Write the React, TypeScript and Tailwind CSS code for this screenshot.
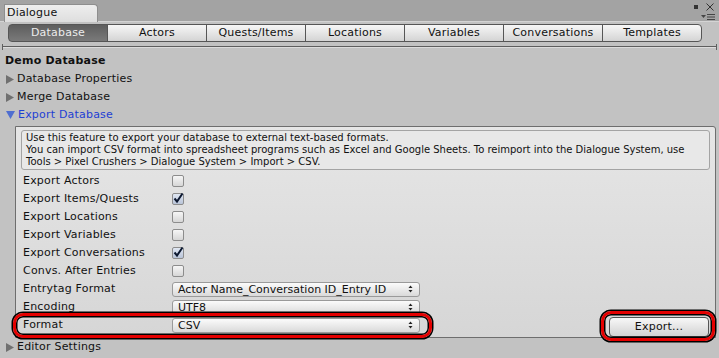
import React from "react";

const tabs = ["Database", "Actors", "Quests/Items", "Locations", "Variables", "Conversations", "Templates"];

function Arrow({ open }: { open?: boolean }) {
  return open ? (
    <svg width="9" height="8" viewBox="0 0 9 8" className="shrink-0">
      <polygon points="0,0 9,0 4.5,8" fill="#4f6ed0" />
    </svg>
  ) : (
    <svg width="8" height="9" viewBox="0 0 8 9" className="shrink-0">
      <polygon points="0,0 8,4.5 0,9" fill="#707070" />
    </svg>
  );
}

function Foldout({ label, open }: { label: string; open?: boolean }) {
  return (
    <div className="h-[18px] flex items-center pl-[6px] gap-[3px]">
      <Arrow open={open} />
      <span className={open ? "text-[#1e3fd4]" : "text-[#111]"}>{label}</span>
    </div>
  );
}

function Checkbox({ checked }: { checked?: boolean }) {
  return (
    <div
      className={`relative w-[12px] h-[12px] rounded-[2px] border border-[#8c8c8c] ${
        checked ? "bg-gradient-to-b from-[#dfe6f2] to-[#b9c4d8]" : "bg-gradient-to-b from-[#f6f6f6] to-[#d6d6d6]"
      }`}
    >
      {checked && (
        <svg width="12" height="12" viewBox="0 0 12 12" className="absolute -left-px -top-[2px]">
          <path d="M2.5 6.5 L5 9.5 L10.5 1.5" stroke="#0c1830" strokeWidth="2" fill="none" />
        </svg>
      )}
    </div>
  );
}

function Popup({ value }: { value: string }) {
  return (
    <div className="w-[248px] h-[15px] rounded-[3px] border border-[#9a9a9a] bg-gradient-to-b from-[#fbfbfb] to-[#dadada] flex items-center justify-between pl-[5px] pr-[6px]">
      <span className="text-[11px] leading-none tracking-normal text-[#111]">{value}</span>
      <svg width="5" height="8" viewBox="0 0 5 8">
        <polygon points="0.5,3 4.5,3 2.5,0.5" fill="#222" />
        <polygon points="0.5,5 4.5,5 2.5,7.5" fill="#222" />
      </svg>
    </div>
  );
}

function Row({ label, children }: { label: string; children: React.ReactNode }) {
  return (
    <div className="h-[18px] flex items-center">
      <span className="w-[156px] pl-[7px] shrink-0">{label}</span>
      {children}
    </div>
  );
}

export default function App() {
  return (
    <div className="relative w-[719px] h-[358px] overflow-hidden bg-[#c2c2c2] font-['DejaVu_Sans',sans-serif] text-[11px] tracking-[0.2px] text-[#111]">
      {/* window tab strip */}
      <div className="relative h-[22px] bg-[#a3a3a3] border-b border-[#d4d4d4] flex items-end pl-[4px]">
        <div className="w-[94px] h-[18px] -mb-px bg-gradient-to-b from-[#eeeeee] to-[#dedede] border border-b-0 border-[#8e8e8e] rounded-tr-[4px] flex items-center pl-[2px] text-[#111]">
          Dialogue
        </div>
        <div className="absolute right-[5px] top-[3px] flex items-center gap-[8px]">
          <div className="w-[4px] h-[4px] border border-[#333] bg-[#333] border-t-2" />
          <svg width="8" height="8" viewBox="0 0 8 8">
            <path d="M0.5 0.5 L7.5 7.5 M7.5 0.5 L0.5 7.5" stroke="#333" strokeWidth="1" />
          </svg>
        </div>
        <div className="absolute right-[4px] top-[14px] flex items-center gap-[1px]">
          <svg width="5" height="4" viewBox="0 0 5 4">
            <polygon points="0,0 5,0 2.5,3" fill="#444" />
          </svg>
          <svg width="8" height="6" viewBox="0 0 8 6">
            <path d="M0 0.5 H8 M0 3 H8 M0 5.5 H8" stroke="#444" strokeWidth="1" />
          </svg>
        </div>
      </div>

      {/* toolbar */}
      <div className="flex h-[18px] ml-[8px] mt-[2px]">
        {tabs.map((t, i) => (
          <div
            key={t}
            className={`w-[100px] flex items-center justify-center border border-[#565656] ${i > 0 ? "-ml-px" : ""} ${
              i === 0
                ? "rounded-l-[4px] bg-gradient-to-b from-[#5e5e5e] to-[#7a7a7a] text-[#ececec]"
                : "bg-gradient-to-b from-[#f7f7f7] to-[#d4d4d4] text-[#111]"
            } ${i === tabs.length - 1 ? "rounded-r-[4px]" : ""}`}
          >
            {t}
          </div>
        ))}
      </div>

      {/* separator */}
      <div className="relative mx-[3px] mt-[4px] h-[2px] border-t border-[#5e5e5e] bg-[#dcdcdc]">
        <div className="absolute -left-px -top-[3px] w-px h-[6px] bg-[#5e5e5e]" />
        <div className="absolute -right-px -top-[3px] w-px h-[6px] bg-[#5e5e5e]" />
      </div>

      <div className="mt-[4px]">
        <div className="h-[18px] flex items-center pl-[5px] font-bold">Demo Database</div>
        <Foldout label="Database Properties" />
        <Foldout label="Merge Database" />
        <Foldout label="Export Database" open />
      </div>

      {/* export box */}
      <div className="ml-[15px] mr-[3px] mt-[2px] h-[212px] border border-[#6e6e6e] rounded-tr-[3px] bg-gradient-to-b from-[#e6e6e6] to-[#d6d6d6] pt-[3px]">
        <div className="mx-[5px] h-[40px] rounded-[3px] border border-[#a4a4a4] bg-[#e8e8e8] px-[4px] pt-[1px] text-[10px] leading-[12px] tracking-normal text-[#111]">
          <div>Use this feature to export your database to external text-based formats.</div>
          <div>
            You can import CSV format into spreadsheet programs such as Excel and Google Sheets. To reimport into the Dialogue System, use
          </div>
          <div>Tools &gt; Pixel Crushers &gt; Dialogue System &gt; Import &gt; CSV.</div>
        </div>
        <div className="mt-[2px]">
          <Row label="Export Actors"><Checkbox /></Row>
          <Row label="Export Items/Quests"><Checkbox checked /></Row>
          <Row label="Export Locations"><Checkbox /></Row>
          <Row label="Export Variables"><Checkbox /></Row>
          <Row label="Export Conversations"><Checkbox checked /></Row>
          <Row label="Convs. After Entries"><Checkbox /></Row>
          <Row label="Entrytag Format"><Popup value="Actor Name_Conversation ID_Entry ID" /></Row>
          <Row label="Encoding"><Popup value="UTF8" /></Row>
          <div className="h-[21px] flex items-start justify-between">
            <div className="relative flex items-center h-[18px]">
              <span className="w-[156px] pl-[7px] shrink-0">Format</span>
              <Popup value="CSV" />
              <div className="absolute -left-[3px] -top-[3px] w-[419px] h-[25px] rounded-[10px] border-[3px] border-[#e40000] shadow-[0_0_0_1.5px_#000,inset_0_0_0_1.5px_#000]" />
            </div>
            <div className="relative mt-[1px] mr-[6px]">
              <div className="w-[100px] h-[20px] rounded-[4px] border border-[#555] bg-gradient-to-b from-[#f8f8f8] to-[#d2d2d2] flex items-center justify-center text-[#111]">
                Export...
              </div>
              <div className="absolute -left-[8px] -top-[6px] w-[114px] h-[30px] rounded-[10px] border-[3px] border-[#e40000] shadow-[0_0_0_1.5px_#000,inset_0_0_0_1.5px_#000]" />
            </div>
          </div>
        </div>
      </div>

      <Foldout label="Editor Settings" />
    </div>
  );
}
